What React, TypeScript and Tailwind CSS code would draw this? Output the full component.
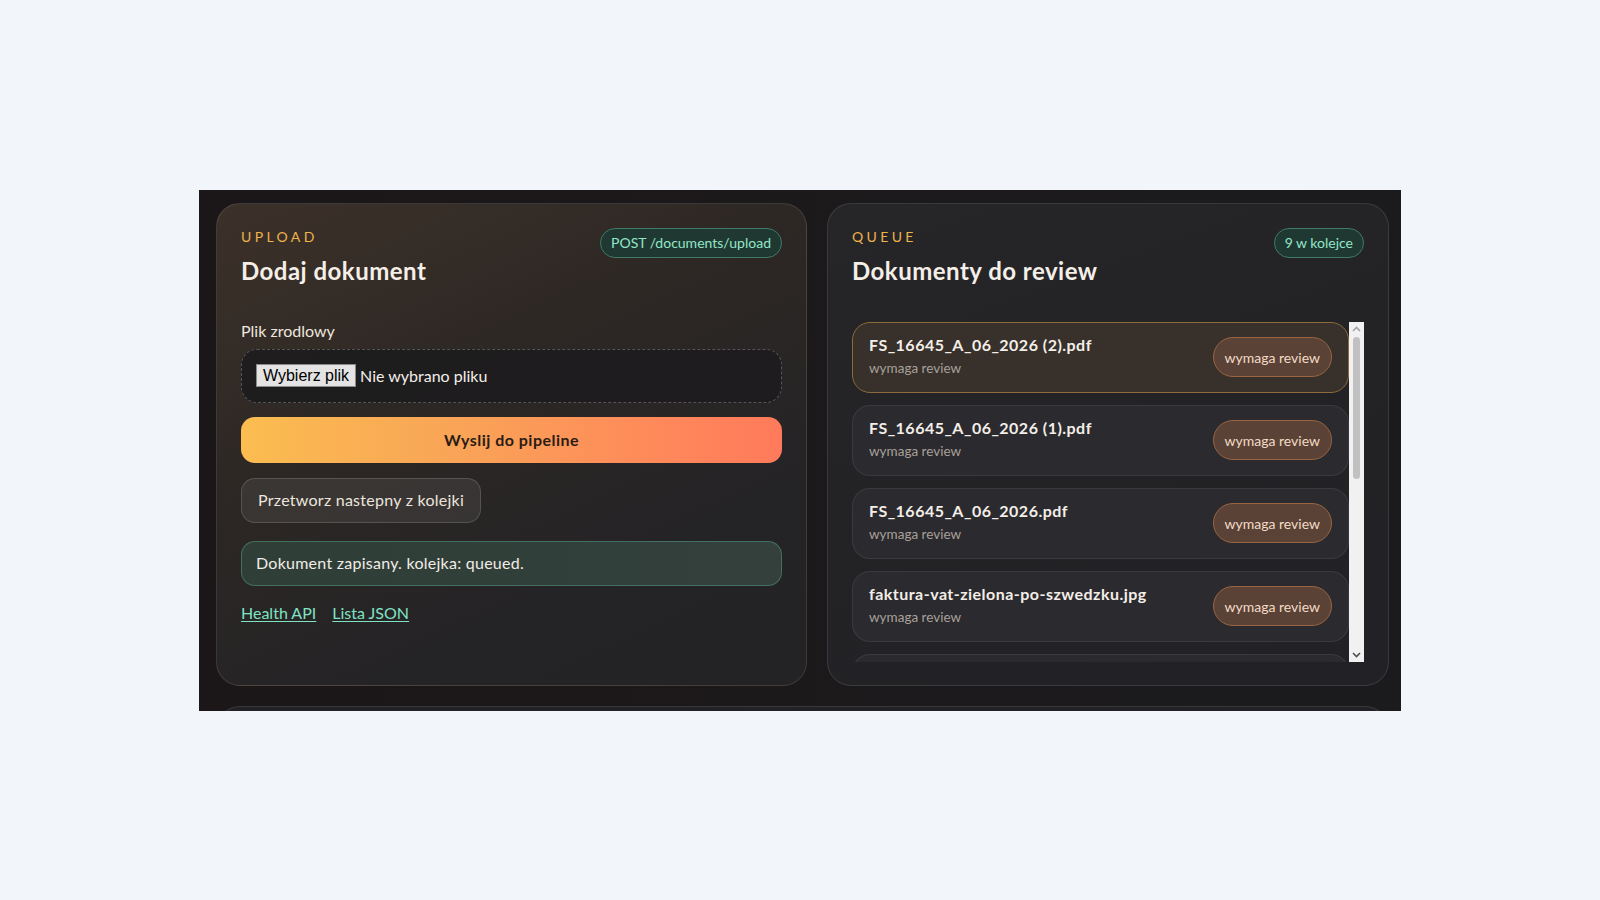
import React from 'react';

type QueueItem = {
    name: string;
    status: string;
    active?: boolean;
};

const items: QueueItem[] = [
    { name: 'FS_16645_A_06_2026 (2).pdf', status: 'wymaga review', active: true },
    { name: 'FS_16645_A_06_2026 (1).pdf', status: 'wymaga review' },
    { name: 'FS_16645_A_06_2026.pdf', status: 'wymaga review' },
    { name: 'faktura-vat-zielona-po-szwedzku.jpg', status: 'wymaga review' },
];

const Badge: React.FC<{ children: React.ReactNode }> = ({ children }) => (
    <span className="flex h-[30px] items-center rounded-full border border-[#3e7a65] bg-[#1f3932] px-[10px] text-[14px] text-[#93e6c8]">
        {children}
    </span>
);

const CardHeader: React.FC<{ kicker: string; title: string; badge: string }> = ({ kicker, title, badge }) => (
    <div className="flex items-start justify-between">
        <div>
            <div className="text-[14px] leading-5 tracking-[0.24em] text-[#f0b24a]">{kicker}</div>
            <h2 className="mt-[8px] text-[24px] font-bold leading-8 tracking-[0.02em] text-[#f5efe8]">{title}</h2>
        </div>
        <div className="pt-px">
            <Badge>{badge}</Badge>
        </div>
    </div>
);

function UploadCard() {
    return (
        <section className="h-[483px] rounded-[24px] border border-white/10 bg-[linear-gradient(155deg,#3c3129_0%,#2c2724_40%,#242326_75%,#232225_100%)] px-6 pt-[23px]">
            <CardHeader kicker="UPLOAD" title="Dodaj dokument" badge="POST /documents/upload" />

            <div className="mt-[34px] text-[16px] leading-5 text-[#ede6de]">Plik zrodlowy</div>

            {/* fake native file input, so the Polish labels show */}
            <div className="mt-[8px] flex h-[54px] items-center gap-[4px] rounded-[16px] border border-dashed border-white/25 bg-[#1d1c1e]/90 px-[14px]">
                <span className="flex h-[23px] items-center border border-[#8a8a8a] bg-[#e4e4e4] px-[6px] font-['Liberation_Sans',Arial,sans-serif] text-[16px] text-black">
                    Wybierz plik
                </span>
                <span className="text-[16px] text-[#f3eee8]">Nie wybrano pliku</span>
            </div>

            <button className="mt-[14px] flex h-[46px] w-full items-center justify-center rounded-[14px] bg-[linear-gradient(90deg,#fbbd50_0%,#f9a457_40%,#ff8a5a_75%,#ff7a5b_100%)] text-[16px] font-bold tracking-[0.03em] text-[#2a1c14]">
                Wyslij do pipeline
            </button>

            <button className="mt-[15px] flex h-[45px] items-center rounded-[14px] border border-white/15 bg-white/[0.07] px-4 text-[16px] tracking-[0.016em] text-[#ece5dd]">
                Przetworz nastepny z kolejki
            </button>

            <div className="mt-[18px] flex h-[45px] items-center rounded-[14px] border border-[#4b8570]/70 bg-[linear-gradient(90deg,#2f3e37_0%,#33403c_100%)] px-[14px] text-[16px] tracking-[0.016em] text-[#f1ece6]">
                Dokument zapisany. kolejka: queued.
            </div>

            <div className="mt-[17px] flex gap-4 text-[16px] leading-5">
                <a className="text-[#7fe3c3] underline underline-offset-2">Health API</a>
                <a className="text-[#7fe3c3] underline underline-offset-2">Lista JSON</a>
            </div>
        </section>
    );
}

function QueueCard() {
    return (
        <section className="h-[483px] rounded-[24px] border border-white/10 bg-[linear-gradient(160deg,#262528_0%,#232326_50%,#222125_100%)] px-6 pt-[23px]">
            <CardHeader kicker="QUEUE" title="Dokumenty do review" badge="9 w kolejce" />

            <div className="mt-[35px] flex h-[340px]">
                <div className="flex flex-1 flex-col gap-3 overflow-hidden">
                    {items.map((item) => (
                        <div
                            key={item.name}
                            className={
                                item.active
                                    ? 'flex h-[71px] shrink-0 items-center justify-between rounded-[18px] border border-[#8d6b3d] bg-[#37302b] px-4'
                                    : 'flex h-[71px] shrink-0 items-center justify-between rounded-[18px] border border-white/[0.07] bg-[#2b2a2e] px-4'
                            }
                        >
                            <div className="flex flex-col self-start pt-[12px]">
                                <span className="text-[16px] font-bold leading-5 tracking-[0.03em] text-[#f4eee8]">{item.name}</span>
                                <span className="mt-[5px] text-[13.5px] leading-4 text-[#a8a09a]">{item.status}</span>
                            </div>
                            <span className="flex h-[40px] items-center rounded-full border border-[#9a6341] bg-[#5a4336] px-[11px] text-[14px] text-[#f4dac6]">
                                {item.status}
                            </span>
                        </div>
                    ))}
                    {/* next entry, only its top edge is in view */}
                    <div className="h-[71px] shrink-0 rounded-[18px] border border-white/[0.07] bg-[#2b2a2e]" />
                </div>

                {/* scrollbar */}
                <div className="relative w-[15px] shrink-0 bg-[#f1f1f1]">
                    <svg className="absolute left-[3px] top-[4px]" width="9" height="6" viewBox="0 0 9 6">
                        <path d="M1 5 L4.5 1.5 L8 5" fill="none" stroke="#a3a3a3" strokeWidth="1.6" />
                    </svg>
                    <div className="absolute left-[4px] top-[15px] h-[142px] w-[7px] rounded-full bg-[#c1c1c1]" />
                    <svg className="absolute bottom-[4px] left-[3px]" width="9" height="6" viewBox="0 0 9 6">
                        <path d="M1 1 L4.5 4.5 L8 1" fill="none" stroke="#505050" strokeWidth="1.6" />
                    </svg>
                </div>
            </div>
        </section>
    );
}

export default function App() {
    return (
        <div className="flex h-screen w-full items-center justify-center bg-[#f2f5f9] font-['Lato','Noto_Sans',sans-serif]">
            <div className="h-[521px] w-[1202px] overflow-hidden bg-[linear-gradient(90deg,#1b1617_0%,#1c191b_50%,#1b1b1e_100%)] pl-[17px] pr-[12px] pt-[13px]">
                <div className="grid grid-cols-[591px_562px] gap-5">
                    <UploadCard />
                    <QueueCard />
                    {/* next row, only its top shows */}
                    <div className="col-span-2 h-40 rounded-[24px] border border-white/10 bg-[#222125]" />
                </div>
            </div>
        </div>
    );
}
